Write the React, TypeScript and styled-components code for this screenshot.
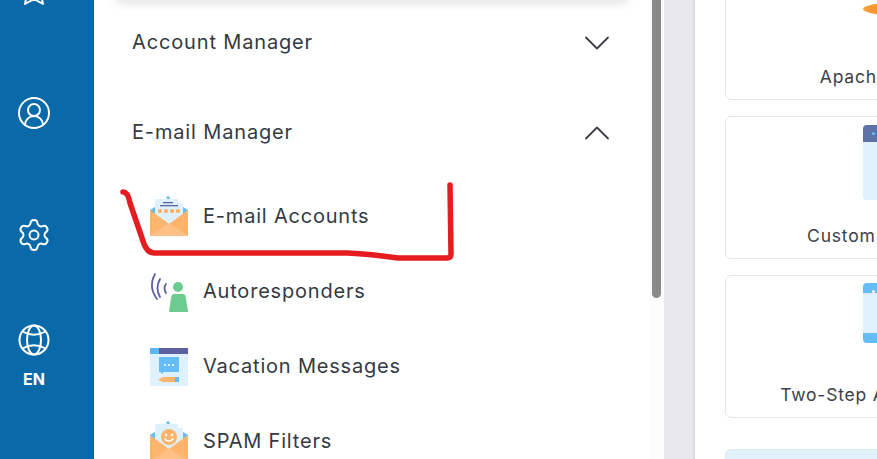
import React from 'react';
import styled, { createGlobalStyle } from 'styled-components';
import { ChevronDown, ChevronUp, CircleUserRound, Settings } from 'lucide-react';

const GlobalStyle = createGlobalStyle`
  html, body {
    margin: 0;
    padding: 0;
    height: 100%;
    overflow: hidden;
    background: #e8e8ee;
    font-family: "Inter", "Open Sans", sans-serif;
  }
`

const Page = styled.div`
  position: relative;
  display: flex;
  width: 877px;
  height: 459px;
  overflow: hidden;
`
const Rail = styled.nav`
  flex: 0 0 94px;
  display: flex;
  flex-direction: column;
  align-items: center;
  box-sizing: border-box;
  margin-top: -70px;
  height: 529px;
  padding-right: 26px;
  background: #0a6aa9;
  color: #fff;
`
const RailItem = styled.div`
  flex: 0 0 122px;
  display: flex;
  align-items: center;
  justify-content: center;
`
const LangItem = styled.div`
  display: flex;
  flex-direction: column;
  align-items: center;
  margin-top: 28px;
  gap: 14px;
`
const LangLabel = styled.span`
  font-size: 16px;
  line-height: 18px;
  font-weight: 700;
`
const Menu = styled.aside`
  flex: 0 0 555px;
  background: #fff;
  padding: 0 24px;
  box-sizing: border-box;
`
const TopCard = styled.div`
  height: 0;
  box-shadow: 0 0 10px 2px rgba(0, 0, 0, 0.22);
`
const SectionRow = styled.div<{ $first?: boolean }>`
  display: flex;
  align-items: center;
  justify-content: space-between;
  height: 90px;
  margin-top: ${props => props.$first ? '-3px' : '0'};
  padding: 0 6px 0 14px;
  font-size: 20px;
  letter-spacing: 0.85px;
  color: #343a42;
`
const Chevron = styled.span`
  display: flex;
  margin-top: 2px;
  color: #3a3f46;
`
const SubList = styled.div`
  display: flex;
  flex-direction: column;
  padding: 1px 0 0 32px;
`
const SubRow = styled.div`
  display: flex;
  align-items: center;
  gap: 15px;
  height: 75px;
  flex-shrink: 0;
  font-size: 20px;
  letter-spacing: 0.8px;
  color: #343a42;
`
const IconBox = styled.svg`
  width: 38px;
  height: 40px;
  margin-top: 2px;
  flex-shrink: 0;
  overflow: visible;
`
const ScrollTrack = styled.div`
  flex: 0 0 15px;
  background: #fcfcfc;
  padding: 0 3px;
  box-sizing: border-box;
`
const ScrollThumb = styled.div`
  height: 298px;
  background: #8a8a8a;
  border-radius: 0 0 5px 5px;
`
const Gutter = styled.div`
  flex: 0 0 31px;
  background: #e8e8ee;
  box-shadow: inset -3px 0 3px -2px rgba(0, 0, 0, 0.1);
`
const Content = styled.main`
  flex: 1 0 0;
  min-width: 0;
  background: #fff;
  padding-left: 30px;
  overflow: hidden;
`
const CardColumn = styled.div`
  display: flex;
  flex-direction: column;
  gap: 16px;
  width: 334px;
  margin-top: -43px;
`
const Card = styled.div`
  display: flex;
  flex-direction: column;
  align-items: center;
  height: 143px;
  flex-shrink: 0;
  box-sizing: border-box;
  border: 1px solid #e6e6ea;
  border-radius: 6px;
`
const CardArt = styled.div<{ $h: number; $top: number; $bg: string }>`
  position: relative;
  flex-shrink: 0;
  width: 58px;
  height: ${props => props.$h}px;
  margin-top: ${props => props.$top}px;
  background: ${props => props.$bg};
  border-radius: 4px;
  overflow: hidden;
`
const ArtBar = styled.div<{ $color: string; $h: number }>`
  height: ${props => props.$h}px;
  background: ${props => props.$color};
`
const ArtFoot = styled.div`
  position: absolute;
  left: 0;
  right: 0;
  bottom: 0;
  height: 10px;
  background: #64bdf7;
`
const ArtDot = styled.i<{ $color: string }>`
  position: absolute;
  top: 7px;
  left: 9px;
  width: 3px;
  height: 3px;
  border-radius: 50%;
  background: ${props => props.$color};
`
const Apache = styled.div`
  flex-shrink: 0;
  width: 58px;
  height: 12px;
  margin-top: 45px;
  background: linear-gradient(90deg, #f9a03a, #e8701c);
  border-radius: 60% 0 0 60%;
`
const CardLabel = styled.span<{ $top: number }>`
  margin-top: ${props => props.$top}px;
  font-size: 17.5px;
  line-height: 22px;
  letter-spacing: 0.8px;
  white-space: nowrap;
  color: #3c4148;
`
const InfoCard = styled.div`
  height: 40px;
  flex-shrink: 0;
  margin-top: 15px;
  background: #e1f2fb;
  border: 1px solid #d8ecf7;
  border-radius: 6px;
`
const Scribble = styled.svg`
  position: absolute;
  left: 0;
  top: 0;
  width: 877px;
  height: 459px;
  pointer-events: none;
`

const MailIcon = ({ smile }: { smile?: boolean }) => (
  <IconBox viewBox="0 0 38 40">
    <path d="M0 13 L19 1 L38 13 V25 H0 Z" fill="#64bdf7" />
    <path d="M5 2 H28 V6 H33 V28 H5 Z" fill="#dff1fd" />
    <circle cx="18" cy="0.5" r="1.5" fill="#64bdf7" />
    {smile ? (
      <g>
        <circle cx="19" cy="15" r="8" fill="#fdb46c" />
        <circle cx="16" cy="13" r="1.2" fill="#fff" />
        <circle cx="22" cy="13" r="1.2" fill="#fff" />
        <path d="M14.5 16.5 Q19 22 23.5 16.5" stroke="#fff" strokeWidth="1.4" fill="none" />
      </g>
    ) : (
      <g>
        <rect x="13" y="5" width="10" height="1.3" fill="#5d5fa3" />
        <rect x="10" y="8" width="18" height="1.3" fill="#5d5fa3" />
        <g fill="#fdb46c">
          <rect x="8" y="12" width="4" height="4" rx="1.5" />
          <rect x="14" y="12" width="4" height="4" rx="1.5" />
          <rect x="20" y="12" width="4" height="4" rx="1.5" />
          <rect x="26" y="12" width="4" height="4" rx="1.5" />
        </g>
      </g>
    )}
    <path d="M0 13 L19 27 L38 13 V39 H0 Z" fill="#fdb46c" />
    <path d="M0 39 L19 26 L38 39 Z" fill="#fec084" />
  </IconBox>
)

const ResponderIcon = () => (
  <IconBox viewBox="0 0 38 40">
    <g fill="none" stroke="#5d5fa3" strokeWidth="1.8" strokeLinecap="round">
      <path d="M5 2 Q-2 15 7 27" />
      <path d="M10 7 Q5 16 10 25" />
      <path d="M16 12 Q13 16 16 21" />
    </g>
    <circle cx="28" cy="15" r="5" fill="#6ccb8e" />
    <path d="M24 22 H33 Q35 22 35.5 24 L38 39 Q38 40 37 40 H20 Q19 40 19 39 L21.5 24 Q22 22 24 22 Z" fill="#6ccb8e" />
  </IconBox>
)

const VacationIcon = () => (
  <IconBox viewBox="0 0 38 40">
    <rect x="0" y="1" width="38" height="38" fill="#dff1fd" />
    <rect x="0" y="1" width="9" height="6" fill="#5cb8f5" />
    <rect x="9" y="1" width="29" height="6" fill="#5d5fa3" />
    <path d="M9 10 H29 V25 H14 L11 27 V25 H9 Z" fill="#62bdf8" />
    <g fill="#fff">
      <circle cx="15" cy="18" r="1" />
      <circle cx="19" cy="18" r="1" />
      <circle cx="23" cy="18" r="1" />
    </g>
    <path d="M8 32.5 L13 30 H25 V35 H13 Z" fill="#fdb46c" />
    <rect x="25" y="30" width="4" height="5" fill="#62bdf8" />
  </IconBox>
)

const GlobeIcon = () => (
  <svg width="32" height="32" viewBox="0 0 32 32" fill="none" stroke="currentColor" strokeWidth="2">
    <circle cx="16" cy="16" r="14.5" />
    <ellipse cx="16" cy="16" rx="7" ry="14.5" />
    <path d="M4.5 7.5 Q16 14 27.5 7.5" />
    <path d="M4.5 24.5 Q16 18 27.5 24.5" />
  </svg>
)

const StarIcon = () => (
  <svg width="32" height="32" viewBox="0 0 32 32" fill="none" stroke="currentColor" strokeWidth="2" strokeLinejoin="round">
    <path d="M16 2 L20 11 L30 12 L23 19 L25 29 L16 24 L7 29 L9 19 L2 12 L12 11 Z" />
  </svg>
)

const menuItems = [
  { label: 'E-mail Accounts', icon: <MailIcon /> },
  { label: 'Autoresponders', icon: <ResponderIcon /> },
  { label: 'Vacation Messages', icon: <VacationIcon /> },
  { label: 'SPAM Filters', icon: <MailIcon smile /> },
];

const App = () => {
  return (
    <Page>
      <GlobalStyle />
      <Rail>
        <RailItem><StarIcon /></RailItem>
        <RailItem><CircleUserRound size={36} strokeWidth={1.3} /></RailItem>
        <RailItem><Settings size={36} strokeWidth={1.3} /></RailItem>
        <LangItem>
          <GlobeIcon />
          <LangLabel>EN</LangLabel>
        </LangItem>
      </Rail>
      <Menu>
        <TopCard />
        <SectionRow $first>
          Account Manager
          <Chevron><ChevronDown size={44} strokeWidth={1} /></Chevron>
        </SectionRow>
        <SectionRow>
          E-mail Manager
          <Chevron><ChevronUp size={44} strokeWidth={1} /></Chevron>
        </SectionRow>
        <SubList>
          {menuItems.map(item => (
            <SubRow key={item.label}>
              {item.icon}
              {item.label}
            </SubRow>
          ))}
        </SubList>
      </Menu>
      <ScrollTrack><ScrollThumb /></ScrollTrack>
      <Gutter />
      <Content>
        <CardColumn>
          <Card>
            <Apache />
            <CardLabel $top={51}>Apache Handler</CardLabel>
          </Card>
          <Card>
            <CardArt $h={75} $top={8} $bg="#dff1fd">
              <ArtBar $color="#5d73a8" $h={17} />
              <ArtDot $color="#64bdf7" />
            </CardArt>
            <CardLabel $top={25}>Custom Error Page</CardLabel>
          </Card>
          <Card>
            <CardArt $h={60} $top={7} $bg="#dff1fd">
              <ArtBar $color="#64bdf7" $h={10} />
              <ArtDot $color="#fff" />
              <ArtFoot />
            </CardArt>
            <CardLabel $top={41}>Two-Step Authentication</CardLabel>
          </Card>
          <InfoCard />
        </CardColumn>
      </Content>
      <Scribble viewBox="0 0 877 459" fill="none">
        <path
          d="M123 192 Q128 192 130 203 L142 238 Q146 253 154 253 L348 253 Q370 254 398 258 L447 258 Q451 258 451 254 L450 185"
          stroke="#e51c20"
          strokeWidth="5.5"
          strokeLinecap="round"
          strokeLinejoin="round"
        />
      </Scribble>
    </Page>
  )
}

export default App;
